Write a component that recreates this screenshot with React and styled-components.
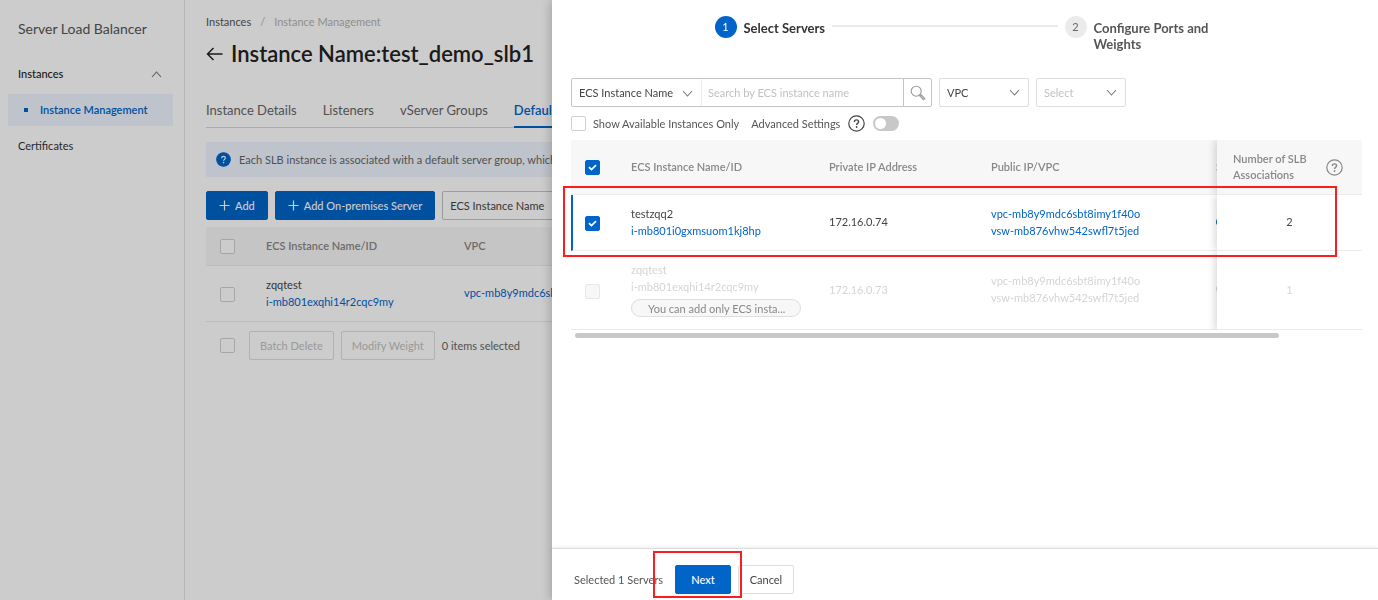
import React, {useState} from 'react';
import styled, {createGlobalStyle, css} from 'styled-components';

const GlobalStyle = createGlobalStyle`
  *,
  *::before,
  *::after {
    box-sizing: border-box;
  }

  body {
    margin: 0;
    overflow: hidden;
    background: #fff;
    color: #333;
    font-family: Lato, 'Open Sans', sans-serif;
    font-size: 11px;
    line-height: 16px;
  }

  button,
  input,
  select {
    font: inherit;
  }

  a {
    color: #0064c8;
    text-decoration: none;
  }
`;

const Layout = styled.div`
  display: flex;
  min-height: 100vh;
`;

const Sidebar = styled.nav`
  flex: none;
  width: 185px;
  padding: 20px 11px 0 8px;
  border-right: 1px solid #e3e4e6;
`;

const SidebarTitle = styled.div`
  padding: 0 10px;
  margin-bottom: 20px;
  font-size: 14px;
  line-height: 18px;
  color: #555;
`;

const SidebarItem = styled.a`
  display: flex;
  align-items: center;
  height: 32px;
  margin-bottom: 4px;
  padding: 0 11px 0 10px;
  color: #333;
`;

const SidebarGroup = styled(SidebarItem)`
  justify-content: space-between;
  font-weight: 500;
  color: #222;
`;

const SidebarSubItem = styled(SidebarItem)`
  gap: 12px;
  padding-left: 16px;
  background: #eff5ff;
  color: #0064c8;
  font-weight: 600;

  &::before {
    content: '';
    width: 4px;
    height: 4px;
    background: #0064c8;
  }
`;

const Main = styled.main`
  flex: 1;
  min-width: 0;
  padding: 14px 21px;
`;

const Breadcrumb = styled.div`
  display: flex;
  gap: 9px;
  color: #b3b3b3;

  a {
    color: #555;
  }
`;

const PageTitle = styled.h1`
  display: flex;
  align-items: center;
  gap: 8px;
  margin: 10px 0 28px;
  font-size: 22px;
  font-weight: 600;
  line-height: 28px;
  color: #222;
`;

const Tabs = styled.div`
  display: flex;
  gap: 26px;
  margin-bottom: 14px;
  border-bottom: 1px solid #d8d8d8;
`;

const Tab = styled.a`
  height: 32px;
  padding-top: 4px;
  margin-bottom: -1px;
  font-size: 13px;
  line-height: 20px;
  color: #666;

  ${(props) =>
    props.$active &&
    css`
      color: #0064c8;
      font-weight: 600;
      border-bottom: 2px solid #0064c8;
    `}
`;

const Notice = styled.div`
  display: flex;
  align-items: center;
  gap: 8px;
  height: 35px;
  margin-bottom: 14px;
  padding: 0 10px;
  background: #eff5ff;
  color: #666;
`;

const Toolbar = styled.div`
  display: flex;
  align-items: center;
  gap: 7px;
`;

const Button = styled.button`
  display: flex;
  align-items: center;
  justify-content: center;
  gap: 5px;
  height: 29px;
  padding: 0 ${(props) => props.$pad || 12}px;
  border: 1px solid #dedede;
  border-radius: 2px;
  background: #fff;
  color: #444;
  white-space: nowrap;
  cursor: pointer;

  &:disabled {
    border-color: #dedede;
    color: #c1c1c1;
    cursor: default;
  }

  ${(props) =>
    props.$primary &&
    css`
      border-color: #0064c8;
      background: #0064c8;
      color: #fff;
      font-weight: 500;
    `}
`;

const SelectBox = styled.label`
  position: relative;
  display: flex;
  width: ${(props) => props.$width}px;

  svg {
    position: absolute;
    top: 9px;
    right: 9px;
    pointer-events: none;
  }
`;

const StyledSelect = styled.select`
  appearance: none;
  width: 100%;
  height: 29px;
  padding: 0 24px 0 7px;
  border: 1px solid ${(props) => (props.$strong ? '#c4c4c4' : '#dedede')};
  border-radius: 2px;
  background: #fff;
  color: ${(props) => (props.$muted ? '#c1c1c1' : '#444')};
`;

const CheckboxBox = styled.span`
  position: relative;
  display: block;
  width: 15px;
  height: 15px;

  svg {
    position: absolute;
    inset: 0;
    pointer-events: none;
  }
`;

const CheckboxInput = styled.input`
  appearance: none;
  display: block;
  width: 15px;
  height: 15px;
  margin: 0;
  border: 1px solid #d0d0d0;
  border-radius: 2px;
  background: #fff;

  &:checked {
    border-color: #0064c8;
    background: #0064c8;
  }

  &:disabled {
    border-color: #e6e7eb;
    background: #f7f7f7;
  }
`;

const Table = styled.table`
  width: ${(props) => props.$width || '100%'};
  border-collapse: separate;
  border-spacing: 0;
  table-layout: fixed;
`;

const Col = styled.col`
  width: ${(props) => props.$width}px;
`;

const Th = styled.th`
  height: ${(props) => props.$height}px;
  padding: 0 16px;
  border-bottom: 1px solid #ebebeb;
  background: #f7f7f7;
  color: #888;
  font-weight: 600;
  text-align: left;
`;

const Td = styled.td`
  height: ${(props) => props.$height}px;
  padding: 0 16px 2px;
  border-bottom: 1px solid #ebebeb;
  background: #fff;
  line-height: 17px;
  color: ${(props) => (props.$disabled ? '#d5d5d5' : '#444')};

  a {
    display: block;
    color: ${(props) => (props.$disabled ? '#d5d5d5' : '#0064c8')};
  }
`;

const CheckTh = styled(Th)`
  padding: 0 14px;
`;

const CheckTd = styled(Td)`
  padding: 2px 14px 0;
  border-left: ${(props) => (props.$selected ? '2px solid #0064c8' : '0')};
  padding-left: ${(props) => (props.$selected ? 12 : 14)}px;
`;

const pinned = css`
  position: sticky;
  right: 0;
  box-shadow: -2px 0 8px rgba(0, 0, 0, 0.16);
  clip-path: inset(0 0 0 -12px);
`;

const PinnedTh = styled(Th)`
  ${pinned}
`;

const PinnedTd = styled(Td)`
  ${pinned}
  text-align: center;
`;

const HeaderWithHelp = styled.div`
  display: flex;
  align-items: center;
  justify-content: space-between;
  padding-right: 3px;

  span {
    max-width: 80px;
  }
`;

const BatchBar = styled.div`
  display: flex;
  align-items: center;
  gap: 7px;
  padding: 9px 14px;
  color: #666;

  > :first-child {
    margin-right: 7px;
  }
`;

const Backdrop = styled.div`
  position: fixed;
  inset: 0;
  background: rgba(0, 0, 0, 0.2);
`;

const Drawer = styled.section`
  position: fixed;
  top: 0;
  right: 0;
  bottom: 0;
  display: flex;
  flex-direction: column;
  width: 60%;
  max-width: 826px;
  background: #fff;
  box-shadow: -2px 0 10px rgba(0, 0, 0, 0.2);
`;

const DrawerBody = styled.div`
  flex: 1;
  min-height: 0;
  padding: 16px 16px 0 19px;
`;

const Steps = styled.ol`
  display: flex;
  align-items: flex-start;
  gap: 7px;
  max-width: 504px;
  height: 62px;
  margin: 0 auto;
  padding: 0;
  list-style: none;
`;

const Step = styled.li`
  display: flex;
  gap: 7px;
  max-width: 154px;
  color: ${(props) => (props.$active ? '#333' : '#555')};
  font-size: 13px;
  font-weight: 700;
`;

const StepNumber = styled.span`
  flex: none;
  width: 22px;
  height: 22px;
  border-radius: 50%;
  background: ${(props) => (props.$active ? '#0064c8' : '#ebebeb')};
  color: ${(props) => (props.$active ? '#fff' : '#666')};
  font-size: 11px;
  font-weight: 400;
  line-height: 22px;
  text-align: center;
`;

const StepTitle = styled.span`
  padding-top: 4px;
`;

const StepLine = styled.li`
  flex: 1;
  height: 2px;
  margin-top: 9px;
  background: #ebebeb;
`;

const Search = styled.div`
  display: flex;
  width: 361px;
  height: 29px;
  border: 1px solid #c4c4c4;
  border-radius: 2px;

  ${StyledSelect} {
    height: 27px;
    border: 0;
    border-right: 1px solid #ebebeb;
  }
`;

const SearchInput = styled.input`
  flex: 1;
  min-width: 0;
  padding: 0 6px;
  border: 0;
  outline: none;

  &::placeholder {
    color: #c1c1c1;
  }
`;

const SearchButton = styled.button`
  display: flex;
  align-items: center;
  justify-content: center;
  width: 28px;
  padding: 0;
  border: 0;
  border-left: 1px solid #c4c4c4;
  background: none;
`;

const Options = styled.div`
  display: flex;
  align-items: center;
  height: 33px;
  color: #555;
`;

const CheckLabel = styled.label`
  display: flex;
  align-items: center;
  gap: 7px;
  margin-right: 12px;
`;

const Switch = styled.input`
  appearance: none;
  width: 26px;
  height: 15px;
  margin: 0 0 0 8px;
  border-radius: 8px;
  background: #c8c8c8;

  &::before {
    content: '';
    display: block;
    width: 11px;
    height: 11px;
    margin: 2px;
    border-radius: 50%;
    background: #fff;
  }

  &:checked {
    background: #0064c8;
  }

  &:checked::before {
    margin-left: 13px;
  }
`;

const SettingsLabel = styled.span`
  margin-right: 8px;
`;

const TableArea = styled.div`
  position: relative;
`;

const ServerListArea = styled.div`
  margin-top: 7px;
`;

const TableScroll = styled.div`
  overflow: hidden;
`;

const ScrollThumb = styled.div`
  width: 89%;
  height: 5px;
  margin: 3px 4px;
  border-radius: 3px;
  background: #c8c8c8;
`;

const Tag = styled.span`
  display: block;
  width: 170px;
  height: 18px;
  margin-top: 4px;
  padding: 0 16px;
  border: 1px solid #dedede;
  border-radius: 9px;
  background: #f7f7f7;
  color: #888;
  line-height: 17px;
  white-space: nowrap;
`;

const StatusDot = styled.span`
  display: block;
  width: 8px;
  height: 8px;
  border-radius: 50%;
  background: ${(props) => (props.$disabled ? '#d5d5d5' : '#0064c8')};
`;

const RowMark = styled.div`
  position: absolute;
  top: 46px;
  right: 25px;
  left: -8px;
  height: 71px;
  border: 2px solid #fa1e1e;
  pointer-events: none;
`;

const Footer = styled.footer`
  display: flex;
  align-items: center;
  gap: 7px;
  padding: 16px 22px 6px;
  border-top: 1px solid #dcdcdc;
  box-shadow: 0 -1px 3px rgba(0, 0, 0, 0.08);
  color: #555;
`;

const SelectedCount = styled.span`
  margin-right: 5px;

  b {
    color: #0064c8;
    font-weight: 400;
  }
`;

const ButtonMark = styled.div`
  position: relative;

  &::after {
    content: '';
    position: absolute;
    z-index: 1;
    inset: -14px -11px -4px -22px;
    border: 2px solid #fa1e1e;
    pointer-events: none;
  }
`;

const Chevron = ({up}) => (
  <svg width="11" height="11" viewBox="0 0 11 11" fill="none" stroke="#777" strokeWidth="1.1">
    <path d={up ? 'M1 8l4.5-5L10 8' : 'M1 3l4.5 5L10 3'} />
  </svg>
);

const Plus = () => (
  <svg width="11" height="11" viewBox="0 0 11 11" fill="none" stroke="currentColor" strokeWidth="1.2">
    <path d="M5.5 0.5v10M0.5 5.5h10" />
  </svg>
);

const ArrowLeft = () => (
  <svg width="17" height="14" viewBox="0 0 17 14" fill="none" stroke="#222" strokeWidth="1.5">
    <path d="M1.5 7H16.5M7.5 1L1.5 7l6 6" />
  </svg>
);

const SearchIcon = () => (
  <svg width="16" height="16" viewBox="0 0 16 16" fill="none" stroke="#999" strokeWidth="1.1">
    <circle cx="6.2" cy="6.2" r="5" />
    <path d="M9.6 10.8l1.2-1.2 4 3.9-1.3 1.3z" fill="#ccc" />
  </svg>
);

const Help = ({size = 17, color = '#888', filled}) => (
  <svg width={size} height={size} viewBox="0 0 17 17" fill="none">
    <circle cx="8.5" cy="8.5" r="7.7" stroke={color} strokeWidth="1.2" fill={filled ? color : 'none'} />
    <path
      d="M6.4 7c0-1.3.9-2.1 2.1-2.1s2.1.8 2.1 1.9c0 1.5-2 1.6-2 3.1"
      stroke={filled ? '#fff' : color}
      strokeWidth="1.4"
    />
    <circle cx="8.6" cy="12" r="0.9" fill={filled ? '#fff' : color} />
  </svg>
);

const Checkbox = ({label, checked, onChange, ...rest}) => (
  <CheckboxBox>
    <CheckboxInput type="checkbox" aria-label={label} checked={!!checked} onChange={onChange} {...rest} />
    {checked && (
      <svg width="15" height="15" viewBox="0 0 15 15" fill="none" stroke="#fff" strokeWidth="1.8">
        <path d="M4 7.2l2.5 2.4L11 5.2" />
      </svg>
    )}
  </CheckboxBox>
);

const Select = ({width, label, options, strong, muted}) => (
  <SelectBox $width={width}>
    <StyledSelect aria-label={label} $strong={strong} $muted={muted}>
      {options.map((option) => (
        <option key={option}>{option}</option>
      ))}
    </StyledSelect>
    <Chevron />
  </SelectBox>
);

const servers = [
  {
    name: 'testzqq2',
    id: 'i-mb801i0gxmsuom1kj8hp',
    ip: '172.16.0.74',
    vpc: 'vpc-mb8y9mdc6sbt8imy1f40o',
    vsw: 'vsw-mb876vhw542swfl7t5jed',
    count: 2
  },
  {
    name: 'zqqtest',
    id: 'i-mb801exqhi14r2cqc9my',
    ip: '172.16.0.73',
    vpc: 'vpc-mb8y9mdc6sbt8imy1f40o',
    vsw: 'vsw-mb876vhw542swfl7t5jed',
    count: 1,
    disabled: true,
    tag: 'You can add only ECS insta...'
  }
];

const InstancePage = () => (
  <Layout>
    <Sidebar>
      <SidebarTitle>Server Load Balancer</SidebarTitle>
      <SidebarGroup href="#instances">
        Instances
        <Chevron up />
      </SidebarGroup>
      <SidebarSubItem href="#management">Instance Management</SidebarSubItem>
      <SidebarItem href="#certificates">Certificates</SidebarItem>
    </Sidebar>
    <Main>
      <Breadcrumb>
        <a href="#instances">Instances</a>
        <span>/</span>
        <span>Instance Management</span>
      </Breadcrumb>
      <PageTitle>
        <ArrowLeft />
        Instance Name:test_demo_slb1
      </PageTitle>
      <Tabs>
        <Tab href="#details">Instance Details</Tab>
        <Tab href="#listeners">Listeners</Tab>
        <Tab href="#vserver">vServer Groups</Tab>
        <Tab href="#default" $active>
          Default Server Group
        </Tab>
      </Tabs>
      <Notice>
        <Help size={15} color="#0064c8" filled />
        Each SLB instance is associated with a default server group, which
      </Notice>
      <Toolbar>
        <Button $primary>
          <Plus />
          Add
        </Button>
        <Button $primary>
          <Plus />
          Add On-premises Server
        </Button>
        <Select width={130} label="Filter by" options={['ECS Instance Name']} strong />
      </Toolbar>
      <ServerListArea>
        <Table>
          <colgroup>
            <Col $width={44} />
            <Col $width={198} />
            <col />
          </colgroup>
          <thead>
            <tr>
              <CheckTh $height={39}>
                <Checkbox label="Select all servers" />
              </CheckTh>
              <Th>ECS Instance Name/ID</Th>
              <Th>VPC</Th>
            </tr>
          </thead>
          <tbody>
            <tr>
              <CheckTd $height={56}>
                <Checkbox label="Select zqqtest" />
              </CheckTd>
              <Td>
                zqqtest
                <a href="#server">i-mb801exqhi14r2cqc9my</a>
              </Td>
              <Td>
                <a href="#vpc">vpc-mb8y9mdc6sbt8imy1f40o</a>
              </Td>
            </tr>
          </tbody>
        </Table>
        <BatchBar>
          <Checkbox label="Select page" />
          <Button $pad={10} disabled>
            Batch Delete
          </Button>
          <Button $pad={10} disabled>
            Modify Weight
          </Button>
          <span>0 items selected</span>
        </BatchBar>
      </ServerListArea>
    </Main>
  </Layout>
);

const ServerTable = ({selected, onToggle}) => (
  <TableArea>
    <TableScroll>
      <Table $width="891px">
        <colgroup>
          <Col $width={44} />
          <Col $width={198} />
          <Col $width={162} />
          <Col $width={225} />
          <col />
          <Col $width={145} />
        </colgroup>
        <thead>
          <tr>
            <CheckTh $height={55}>
              <Checkbox label="Select all" checked={selected} onChange={onToggle} />
            </CheckTh>
            <Th>ECS Instance Name/ID</Th>
            <Th>Private IP Address</Th>
            <Th>Public IP/VPC</Th>
            <Th>S</Th>
            <PinnedTh>
              <HeaderWithHelp>
                <span>Number of SLB Associations</span>
                <Help />
              </HeaderWithHelp>
            </PinnedTh>
          </tr>
        </thead>
        <tbody>
          {servers.map(({name, id, ip, vpc, vsw, count, disabled, tag}) => (
            <tr key={id}>
              <CheckTd $height={disabled ? 79 : 56} $selected={selected && !disabled}>
                <Checkbox
                  label={`Select ${name}`}
                  checked={selected && !disabled}
                  onChange={onToggle}
                  disabled={disabled}
                />
              </CheckTd>
              <Td $disabled={disabled}>
                {name}
                <a href="#server">{id}</a>
                {tag && <Tag>{tag}</Tag>}
              </Td>
              <Td $disabled={disabled}>{ip}</Td>
              <Td $disabled={disabled}>
                <a href="#vpc">{vpc}</a>
                <a href="#vsw">{vsw}</a>
              </Td>
              <Td>
                <StatusDot $disabled={disabled} />
              </Td>
              <PinnedTd $disabled={disabled}>{count}</PinnedTd>
            </tr>
          ))}
        </tbody>
      </Table>
    </TableScroll>
    <ScrollThumb />
    <RowMark />
  </TableArea>
);

const ServerDrawer = () => {
  const [selected, setSelected] = useState(true);
  const [availableOnly, setAvailableOnly] = useState(false);

  const handleToggle = () => setSelected(!selected);

  return (
    <Drawer>
      <DrawerBody>
        <Steps>
          <Step $active>
            <StepNumber $active>1</StepNumber>
            <StepTitle>Select Servers</StepTitle>
          </Step>
          <StepLine aria-hidden="true" />
          <Step>
            <StepNumber>2</StepNumber>
            <StepTitle>Configure Ports and Weights</StepTitle>
          </Step>
        </Steps>
        <Toolbar>
          <Search>
            <Select width={130} label="Search field" options={['ECS Instance Name']} />
            <SearchInput aria-label="Search" placeholder="Search by ECS instance name" />
            <SearchButton aria-label="Search">
              <SearchIcon />
            </SearchButton>
          </Search>
          <Select width={90} label="Network type" options={['VPC']} />
          <Select width={90} label="Select" options={['Select']} muted />
        </Toolbar>
        <Options>
          <CheckLabel>
            <Checkbox
              label="Show Available Instances Only"
              checked={availableOnly}
              onChange={() => setAvailableOnly(!availableOnly)}
            />
            Show Available Instances Only
          </CheckLabel>
          <SettingsLabel id="advanced">Advanced Settings</SettingsLabel>
          <Help color="#444" />
          <Switch type="checkbox" role="switch" aria-labelledby="advanced" />
        </Options>
        <ServerTable selected={selected} onToggle={handleToggle} />
      </DrawerBody>
      <Footer>
        <SelectedCount>
          Selected <b>{selected ? 1 : 0}</b> Servers
        </SelectedCount>
        <ButtonMark>
          <Button $primary $pad={15}>
            Next
          </Button>
        </ButtonMark>
        <Button $pad={11}>Cancel</Button>
      </Footer>
    </Drawer>
  );
};

const App = () => (
  <>
    <GlobalStyle />
    <InstancePage />
    <Backdrop />
    <ServerDrawer />
  </>
);

export default App;
